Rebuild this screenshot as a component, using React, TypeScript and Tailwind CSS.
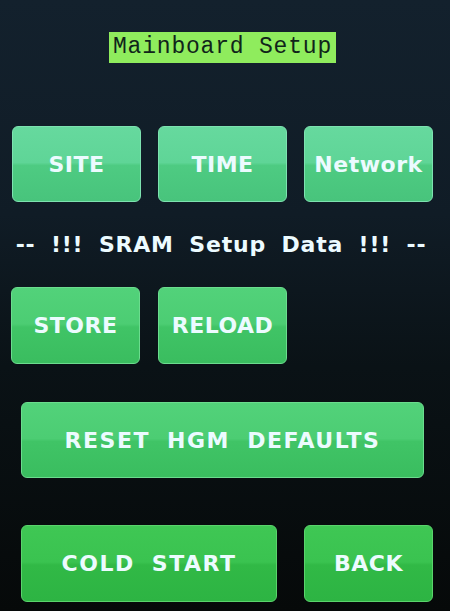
import React from "react";

const sans = { fontFamily: '"DejaVu Sans", "Liberation Sans", sans-serif' };

function Btn({
  label,
  w,
  h,
  tone,
  wide = false,
}: {
  label: string;
  w: string;
  h: string;
  tone: "mint" | "mid" | "deep";
  wide?: boolean;
}) {
  const toneCls =
    tone === "mint"
      ? "bg-[linear-gradient(180deg,#66d99e_0%,#5fd597_48%,#4ecb82_52%,#48c47c_100%)] border-[#7de2b0]"
      : tone === "mid"
      ? "bg-[linear-gradient(180deg,#52d27a_0%,#4ccd73_48%,#40c466_52%,#3abd5f_100%)] border-[#6bdc8e]"
      : "bg-[linear-gradient(180deg,#3fc754_0%,#3ac350_48%,#31b946_52%,#2db443_100%)] border-[#5ad46c]";
  const spacing = wide ? "tracking-[1.5px] [word-spacing:8px]" : "tracking-[0.5px]";
  return (
    <div
      className={`${w} ${h} ${toneCls} ${spacing} border rounded-[6px] flex items-center justify-center text-[#ecfbff] font-bold text-[22px] whitespace-nowrap shrink-0`}
      style={sans}
    >
      {label}
    </div>
  );
}

export default function App() {
  return (
    <div className="w-[450px] h-[611px] overflow-hidden bg-[linear-gradient(180deg,#13212d_0%,#101c26_35%,#0a1216_60%,#060909_100%)] flex flex-col">
      <div className="mt-[32px] ml-[109px] w-[227px] h-[31px] bg-[#8fec5d] flex items-center justify-center">
        <span
          className="text-[#10241a] text-[23px] leading-none tracking-[0.8px]"
          style={{ fontFamily: '"Liberation Mono", "DejaVu Sans Mono", monospace' }}
        >
          Mainboard Setup
        </span>
      </div>

      <div className="mt-[63px] ml-[12px] flex gap-[17px]">
        <Btn label="SITE" w="w-[129px]" h="h-[76px]" tone="mint" />
        <Btn label="TIME" w="w-[129px]" h="h-[76px]" tone="mint" />
        <Btn label="Network" w="w-[129px]" h="h-[76px]" tone="mint" />
      </div>

      <div
        className="mt-[31px] ml-[17px] w-[408px] h-[24px] flex items-center justify-center text-[#ecfbff] font-bold text-[22px] tracking-[0.8px] [word-spacing:7px] whitespace-nowrap leading-none"
        style={sans}
      >
        -- !!! SRAM Setup Data !!! --
      </div>

      <div className="mt-[30px] ml-[11px] flex gap-[18px]">
        <Btn label="STORE" w="w-[129px]" h="h-[77px]" tone="mid" />
        <Btn label="RELOAD" w="w-[129px]" h="h-[77px]" tone="mid" />
      </div>

      <div className="mt-[38px] ml-[21px] flex">
        <Btn label="RESET HGM DEFAULTS" w="w-[403px]" h="h-[76px]" tone="mid" wide />
      </div>

      <div className="mt-[47px] ml-[21px] flex gap-[27px]">
        <Btn label="COLD START" w="w-[256px]" h="h-[77px]" tone="deep" wide />
        <Btn label="BACK" w="w-[129px]" h="h-[77px]" tone="deep" />
      </div>
    </div>
  );
}
